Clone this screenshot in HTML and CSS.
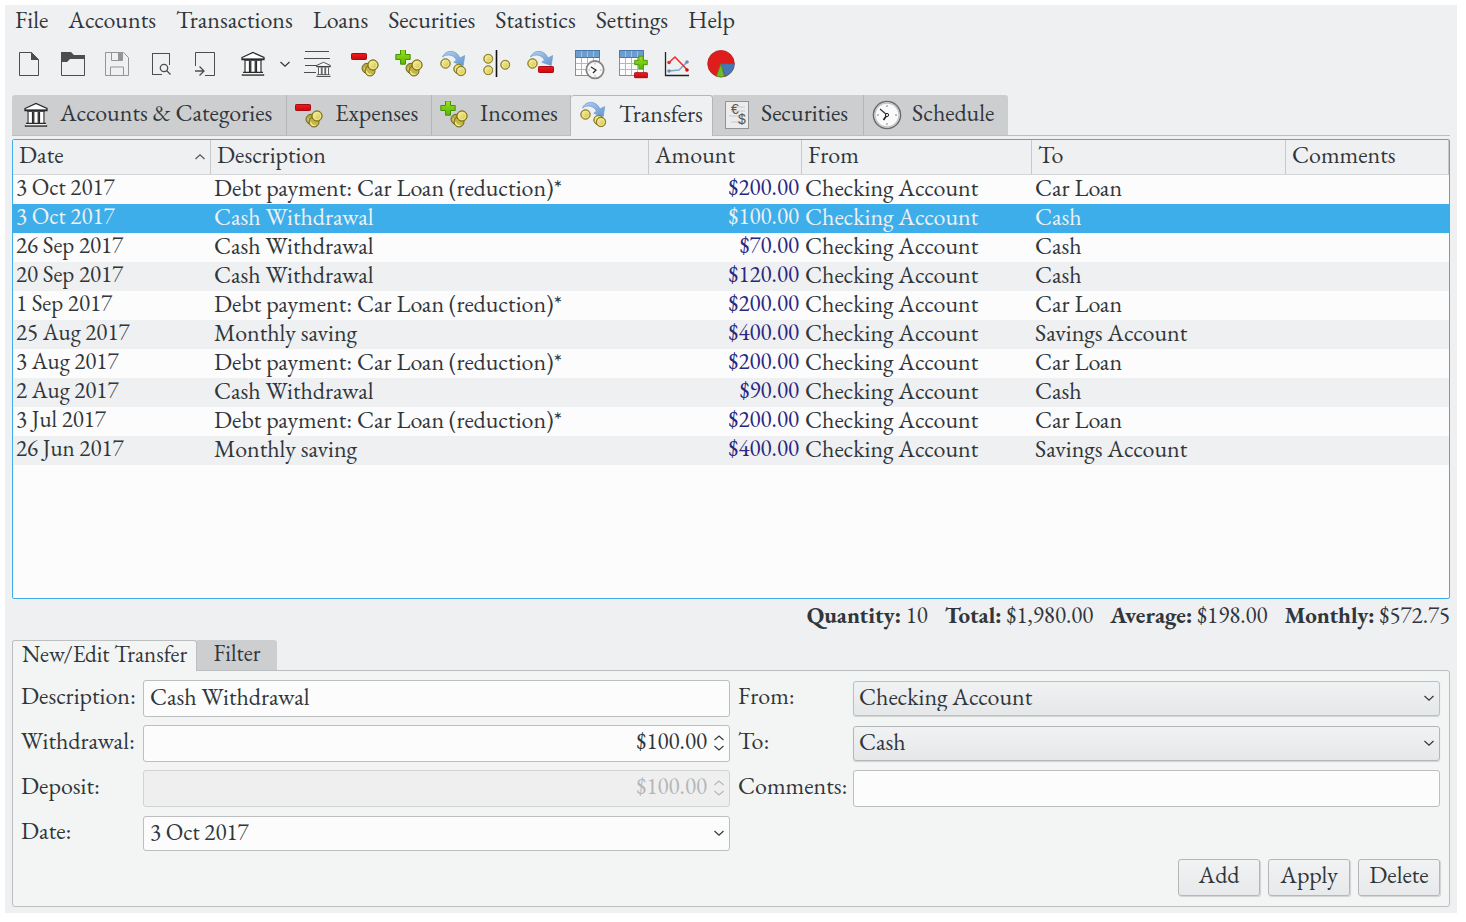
FILE: index.html
```
<!DOCTYPE html>
<html lang="en">
<head>
<meta charset="utf-8">
<title>Transfers</title>
<link rel="stylesheet" href="styles.css">
</head>
<body>
<svg class="defs" aria-hidden="true">
  <defs>
    <linearGradient id="gold" x1="0" y1="0" x2="1" y2="1"><stop offset="0" stop-color="#f8efa0"/><stop offset="1" stop-color="#d3c347"/></linearGradient>
    <linearGradient id="red" x1="0" y1="0" x2="0" y2="1"><stop offset="0" stop-color="#f01c1c"/><stop offset="1" stop-color="#c80a10"/></linearGradient>
    <linearGradient id="green" x1="0" y1="0" x2="0" y2="1"><stop offset="0" stop-color="#9be020"/><stop offset="1" stop-color="#5cb800"/></linearGradient>
    <linearGradient id="blue" x1="0" y1="0" x2="1" y2="1"><stop offset="0" stop-color="#b7d0ec"/><stop offset="1" stop-color="#5f97d2"/></linearGradient>
    <symbol id="coin" viewBox="0 0 12 12"><circle cx="6" cy="6" r="5.2" fill="#b9aa3c" stroke="#7d7120"/><circle cx="6" cy="6" r="3.7" fill="url(#gold)" stroke="#f6ee9c" stroke-width=".9"/></symbol>
    <symbol id="stack" viewBox="0 0 18 18"><circle cx="6" cy="9.3" r="5" fill="#b5a641" stroke="#6f6520"/><path d="M3.2 8.5a3.5 3.5 0 0 0 3 4" fill="none" stroke="#eee27c"/><circle cx="9" cy="12" r="5" fill="#c4b548" stroke="#6f6520"/><path d="M5.5 12a3.5 3.5 0 0 0 5 3" fill="none" stroke="#f5eb92" stroke-width="1.3"/><use href="#coin" x="6" y="0" width="12" height="12"/></symbol>
    <symbol id="minus" viewBox="0 0 16 7"><rect x=".5" y=".5" width="15" height="6" rx=".8" fill="url(#red)" stroke="#a80c10"/></symbol>
    <symbol id="plus" viewBox="0 0 16 16"><path d="M5.5.8h5v4.7h4.7v5h-4.7v4.7h-5v-4.7H.8v-5h4.7z" fill="url(#green)" stroke="#439207" stroke-linejoin="round"/></symbol>
    <symbol id="arc" viewBox="0 0 28 28"><path d="M3.500 7C6.500-.4 17-1 21 8L25.700 5.500 24.200 15.500 14.800 12.300 17.500 10C14.500 4.500 8 3.500 3.500 7z" fill="url(#blue)" stroke="#6b9bd0" stroke-width=".7"/></symbol>
    <symbol id="bank" viewBox="0 0 24 26"><path d="M1 6.500L12 1.500 23 6.500v2H1z" fill="#fff" stroke="#2b2b2b" stroke-width="1.300"/><path d="M1 8h22M3 9.700h18" stroke="#2b2b2b" stroke-width="1.100"/><path d="M3 10h18v11H3z" fill="#fff"/><path d="M4 10v11M8.500 10v11M9.800 10v11M14.200 10v11M15.500 10v11M20 10v11" stroke="#2b2b2b" stroke-width="1.200"/><path d="M2 21.500h20M.8 24h22.400" stroke="#2b2b2b" stroke-width="1.500"/><path d="M2 22.700h20" stroke="#fff"/></symbol>
    <symbol id="expense" viewBox="0 0 28 28"><use href="#minus" y="3" width="16" height="7"/><use href="#stack" x="10" y="9" width="18" height="18"/></symbol>
    <symbol id="income" viewBox="0 0 28 28"><use href="#stack" x="10" y="9" width="18" height="18"/><use href="#plus" width="16" height="16" y="-1"/></symbol>
    <symbol id="transfer" viewBox="0 0 28 28"><use href="#arc" width="28" height="28"/><use href="#coin" x="1" y="8" width="11" height="11"/><use href="#coin" x="14" y="13.500" width="11" height="11"/><use href="#coin" x="16.500" y="15.500" width="11" height="11"/></symbol>
    <symbol id="grid" viewBox="0 0 25 27"><rect x=".5" y=".5" width="24" height="25" fill="#fdfdfd" stroke="#8b8d90"/><path d="M1 13.500h23M1 19.500h23M6.500 8v17M12.500 8v17M18.500 8v17" stroke="#b5b7b9"/><path d="M.5.500h24v7H.5z" fill="#6d9dce" stroke="#4778ab"/><path d="M6.500 1v6M12.500 1v6M18.500 1v6" stroke="#9fc0e3"/></symbol>
    <symbol id="clock" viewBox="0 0 30 30"><circle cx="15" cy="15" r="13.500" fill="#fafafa" stroke="#6a6b6c" stroke-width="1.600"/><circle cx="15" cy="15" r="12" fill="none" stroke="#c2c2c2" stroke-width="1.300"/><path d="M8 9l7 6" fill="none" stroke="#333" stroke-width="1.200"/><path d="M15 15l-3.500 5" stroke="#222" stroke-width="1.700"/><circle cx="15" cy="15" r="1.600" fill="#fafafa" stroke="#222"/><path d="M15 5v2M15 23v2M5 15h2M23 15h2" stroke="#aaa" stroke-width="1.500"/></symbol>
    <symbol id="down" viewBox="0 0 12 8"><path d="M1.500 2L6 6.200 10.500 2" fill="none" stroke="currentColor" stroke-width="1.200"/></symbol>
    <symbol id="spin" viewBox="0 0 12 18"><path d="M1.500 6L6 2l4.500 4M1.500 12L6 16l4.500-4" fill="none" stroke="currentColor" stroke-width="1.100"/></symbol>
  </defs>
</svg>

<div class="app">
  <nav class="menubar" aria-label="Main menu">
    <button>File</button><button>Accounts</button><button>Transactions</button><button>Loans</button><button>Securities</button><button>Statistics</button><button>Settings</button><button>Help</button>
  </nav>

  <div class="toolbar" role="toolbar" aria-label="Tools">
    <div class="tools">
      <button aria-label="New"><svg viewBox="0 0 28 28"><path d="M4.500 2.500h12l7 7v16h-19z" fill="none" stroke="#4d4d4d"/><path d="M16 2l8 8h-8z" fill="#4d4d4d"/></svg></button>
      <button aria-label="Open"><svg viewBox="0 0 28 28"><path d="M2.500 2.500h9l3 3h11v20h-23z" fill="none" stroke="#4d4d4d"/><path d="M2 2h10l3 3h11v4H11l-3 3H2z" fill="#4d4d4d"/></svg></button>
      <button aria-label="Save"><svg viewBox="0 0 28 28"><path d="M2.500 2.500h18l5 5v18h-23zM7.500 25v-8h13v8M8.500 3v7.500h11V3" fill="none" stroke="#949596"/><path d="M15 3h4v7h-4z" fill="#949596"/></svg></button>
      <button aria-label="Print preview"><svg viewBox="0 0 28 28"><path d="M5 3.500h18M5.500 3v22M22.500 3v12M5 24.500h10" fill="none" stroke="#4d4d4d"/><circle cx="17" cy="18" r="3.700" fill="none" stroke="#4d4d4d" stroke-width="1.300"/><path d="M19.500 20.500l4 4" stroke="#4d4d4d" stroke-width="1.300"/></svg></button>
      <button aria-label="Import"><svg viewBox="0 0 28 28"><path d="M4.500 16V2.500h19v23H14" fill="none" stroke="#4d4d4d"/><path d="M4 21h9M8.500 16.500L13 21l-4.500 4.500" fill="none" stroke="#4d4d4d" stroke-width="1.300"/></svg></button>
    </div>
    <div class="tools">
      <button aria-label="Accounts"><svg viewBox="0 0 28 28"><use href="#bank" x="2" y="1" width="24" height="26"/></svg></button>
      <button class="drop" aria-label="More accounts"><svg class="chev"><use href="#down"/></svg></button>
      <button aria-label="Ledger"><svg viewBox="0 0 28 28"><path d="M2 1.500h24M1 8.500h26M2 15.500h12M1 22.500h12" stroke="#4d4d4d"/><use href="#bank" x="13" y="11" width="15" height="17"/></svg></button>
    </div>
    <div class="tools">
      <button aria-label="New expense"><svg><use href="#expense"/></svg></button>
      <button aria-label="New income"><svg><use href="#income"/></svg></button>
      <button aria-label="New transfer"><svg><use href="#transfer"/></svg></button>
      <button aria-label="Split transaction"><svg viewBox="0 0 28 28"><use href="#coin" y="3.500" width="10.500" height="10.500"/><use href="#coin" y="15" width="10.500" height="10.500"/><use href="#coin" x="17" y="9.500" width="10.500" height="10.500"/><path d="M13.500 0v27" stroke="#111" stroke-width="1.600"/></svg></button>
      <button aria-label="Debt payment"><svg viewBox="0 0 28 28"><use href="#arc" width="28" height="28"/><use href="#coin" y="8" width="11" height="11"/><use href="#minus" x="11" y="16" width="16" height="7"/></svg></button>
    </div>
    <div class="tools">
      <button aria-label="Schedule"><svg viewBox="0 0 28 28"><use href="#grid" width="25" height="27"/><circle cx="20" cy="19.700" r="8.700" fill="#f8f8f8" stroke="#858585" stroke-width="1.800"/><path d="M16 17l5 3-3 3" fill="none" stroke="#222" stroke-width="1.200"/><path d="M20 13v1.500M20 25v1.500M13.500 20H15M25 20h1.500" stroke="#aaa"/></svg></button>
      <button aria-label="Edit rows"><svg viewBox="0 0 28 28"><use href="#grid" width="25" height="27"/><use href="#plus" x="15" y="5" width="14" height="15"/><use href="#minus" x="15" y="22" width="14" height="6.500"/></svg></button>
      <button aria-label="Chart"><svg viewBox="0 0 28 28"><path d="M2.500 2v23.500H26" fill="none" stroke="#222" stroke-width="1.300"/><path d="M6 21l10-1 8-8" fill="none" stroke="#7fa5cc" stroke-width="1.500"/><path d="M6 12.500L12 7l12 12.500" fill="none" stroke="#ed2d2d" stroke-width="1.600"/><circle cx="6" cy="12.500" r="1.800" fill="#d33"/><circle cx="24" cy="20" r="1.800" fill="#c11"/><circle cx="6" cy="21" r="1.800" fill="#6890bc"/><circle cx="24" cy="12" r="1.800" fill="#6890bc"/></svg></button>
      <button aria-label="Report"><svg viewBox="0 0 28 28"><circle cx="14" cy="13.700" r="13.300" fill="#df1d1d" stroke="#ad1717" stroke-width=".7"/><path d="M14 13.700h13.300a13.300 13.300 0 0 1-9.300 12.700z" fill="#4878b4" stroke="#345f97" stroke-width=".6"/><path d="M14 13.700l3.300 12.900a13.300 13.300 0 0 1-7.800-.5z" fill="#71b82c" stroke="#4e8f1b" stroke-width=".6"/></svg></button>
    </div>
  </div>

  <div class="tabs" role="tablist" aria-label="Views">
    <button class="tab tab-accounts" role="tab"><svg viewBox="0 0 32 32"><use href="#bank" x="4" y="3" width="24" height="26"/></svg>Accounts &amp; Categories</button>
    <button class="tab tab-expenses" role="tab"><svg viewBox="0 0 32 32"><use href="#expense" y="2" width="28" height="28"/></svg>Expenses</button>
    <button class="tab tab-incomes" role="tab"><svg viewBox="0 0 32 32"><use href="#income" y="2" width="28" height="28"/></svg>Incomes</button>
    <button class="tab tab-transfers active" role="tab" aria-selected="true"><svg viewBox="0 0 32 32"><use href="#transfer" y="1" width="28" height="28"/></svg>Transfers</button>
    <button class="tab tab-securities" role="tab"><svg viewBox="0 0 32 32"><rect x="4.500" y="2.500" width="23" height="27" fill="#ececec" stroke="#929394"/><path d="M10 8h14M10 12h14M8 17h16M10 23h12" stroke="#dadada" stroke-width="2"/><text x="10" y="15" class="glyph">€</text><text x="17" y="25" class="glyph">$</text></svg>Securities</button>
    <button class="tab tab-schedule" role="tab"><svg viewBox="0 0 32 32"><use href="#clock" y="1" width="30" height="30"/></svg>Schedule</button>
  </div>

  <div class="list">
    <table>
      <colgroup><col class="c-date"><col class="c-desc"><col class="c-amount"><col class="c-from"><col class="c-to"><col></colgroup>
      <thead><tr><th><span class="sorted">Date<svg class="chev up"><use href="#down"/></svg></span></th><th>Description</th><th>Amount</th><th>From</th><th>To</th><th>Comments</th></tr></thead>
      <tbody>
        <tr><td class="fig">3 Oct 2017</td><td>Debt payment: Car Loan (reduction)*</td><td class="amt">$200.00</td><td>Checking Account</td><td>Car Loan</td><td></td></tr>
        <tr class="selected"><td class="fig">3 Oct 2017</td><td>Cash Withdrawal</td><td class="amt">$100.00</td><td>Checking Account</td><td>Cash</td><td></td></tr>
        <tr><td class="fig">26 Sep 2017</td><td>Cash Withdrawal</td><td class="amt">$70.00</td><td>Checking Account</td><td>Cash</td><td></td></tr>
        <tr><td class="fig">20 Sep 2017</td><td>Cash Withdrawal</td><td class="amt">$120.00</td><td>Checking Account</td><td>Cash</td><td></td></tr>
        <tr><td class="fig">1 Sep 2017</td><td>Debt payment: Car Loan (reduction)*</td><td class="amt">$200.00</td><td>Checking Account</td><td>Car Loan</td><td></td></tr>
        <tr><td class="fig">25 Aug 2017</td><td>Monthly saving</td><td class="amt">$400.00</td><td>Checking Account</td><td>Savings Account</td><td></td></tr>
        <tr><td class="fig">3 Aug 2017</td><td>Debt payment: Car Loan (reduction)*</td><td class="amt">$200.00</td><td>Checking Account</td><td>Car Loan</td><td></td></tr>
        <tr><td class="fig">2 Aug 2017</td><td>Cash Withdrawal</td><td class="amt">$90.00</td><td>Checking Account</td><td>Cash</td><td></td></tr>
        <tr><td class="fig">3 Jul 2017</td><td>Debt payment: Car Loan (reduction)*</td><td class="amt">$200.00</td><td>Checking Account</td><td>Car Loan</td><td></td></tr>
        <tr><td class="fig">26 Jun 2017</td><td>Monthly saving</td><td class="amt">$400.00</td><td>Checking Account</td><td>Savings Account</td><td></td></tr>
      </tbody>
    </table>
  </div>

  <div class="summary">
    <span><b>Quantity:</b> 10</span><span><b>Total:</b> $1,980.00</span><span><b>Average:</b> $198.00</span><span><b>Monthly:</b> $572.75</span>
  </div>

  <div class="subtabs" role="tablist" aria-label="Editor">
    <button class="subtab subtab-edit active" role="tab" aria-selected="true">New/Edit Transfer</button>
    <button class="subtab subtab-filter" role="tab">Filter</button>
  </div>
  <form class="panel">
    <div class="fields">
      <label for="desc">Description:</label>
      <input id="desc" class="field" type="text" value="Cash Withdrawal">
      <label for="from">From:</label>
      <div class="holder"><select id="from" class="field combo focus"><option>Checking Account</option></select><svg class="chev"><use href="#down"/></svg></div>
      <label for="withdrawal">Withdrawal:</label>
      <div class="holder"><input id="withdrawal" class="field number" type="text" value="$100.00"><svg class="spin"><use href="#spin"/></svg></div>
      <label for="to">To:</label>
      <div class="holder"><select id="to" class="field combo"><option>Cash</option></select><svg class="chev"><use href="#down"/></svg></div>
      <label for="deposit">Deposit:</label>
      <div class="holder off"><input id="deposit" class="field number" type="text" value="$100.00" disabled><svg class="spin"><use href="#spin"/></svg></div>
      <label for="comments">Comments:</label>
      <input id="comments" class="field" type="text">
      <label for="date">Date:</label>
      <div class="holder"><select id="date" class="field date"><option>3 Oct 2017</option></select><svg class="chev"><use href="#down"/></svg></div>
    </div>
    <div class="actions"><button type="button">Add</button><button type="button">Apply</button><button type="button">Delete</button></div>
  </form>
</div>
</body>
</html>
```
FILE: styles.css
```
* { box-sizing: border-box; }
body {
  margin: 0;
  padding: 5px 9px 9px 5px;
  background: #fff;
  color: #31363b;
  font: 24px/28px "EB Garamond", "Liberation Serif", serif;
}
button, input, select { font: inherit; color: inherit; margin: 0; }
button { border: 0; padding: 0; background: none; white-space: nowrap; }
svg { display: block; overflow: visible; }
.defs { position: absolute; width: 0; height: 0; }

.app {
  display: flex;
  flex-direction: column;
  min-height: calc(100vh - 14px);
  padding: 0 7px 6px;
  background: #eff0f1;
}

.menubar { display: flex; gap: 20px; height: 33px; padding: 0 0 4px 3px; }

.toolbar { display: flex; gap: 4px; height: 52px; margin: 0 0 5px -5px; align-items: center; }
.tools { display: flex; }
.tools button { display: grid; place-items: center; width: 44px; height: 44px; }
.tools button svg { width: 28px; height: 28px; }
.tools .drop { width: 20px; }
.tools .drop svg, .chev { width: 12px; height: 8px; }
.up { transform: rotate(180deg); }

.tabs { display: flex; border-bottom: 1px solid #bcbebf; margin-bottom: 3px; }
.tab {
  display: flex;
  align-items: center;
  gap: 8px;
  height: 40px;
  padding: 0 8px 4px;
  background: #cdced0;
  border-right: 1px solid #b4b6b7;
}
.tab svg { width: 32px; height: 32px; flex: none; margin-top: 4px; }
.tab:first-child { border-top-left-radius: 3px; }
.tab:last-child { border-top-right-radius: 3px; border-right: 0; }
.tab.active { height: 41px; margin-bottom: -1px; background: #eff0f1; border-top: 1px solid #b4b6b7; border-radius: 3px 3px 0 0; }
.tab-accounts { width: 275px; }
.tab-expenses { width: 145px; }
.tab-incomes { width: 139px; }
.tab-transfers { width: 142px; }
.tab-securities { width: 151px; }
.tab-schedule { width: 144px; }
.glyph { font: 14px "Liberation Sans", sans-serif; fill: #555; }

.list { flex: 1; background: #fcfcfc; border: 1px solid #3daee9; border-radius: 2px; }
table { width: 100%; table-layout: fixed; border-collapse: separate; border-spacing: 0; }
.c-date { width: 198px; }
.c-desc { width: 438px; }
.c-amount { width: 153px; }
.c-from { width: 230px; }
.c-to { width: 254px; }
th {
  height: 35px;
  padding: 0 6px 4px;
  background: #eff0f1;
  border-right: 1px solid #c8c9ca;
  border-bottom: 1px solid #d5d6d7;
  font-weight: normal;
  text-align: left;
}
.sorted { display: flex; justify-content: space-between; align-items: center; }
.sorted svg { margin: 4px -2px 0 0; color: #555; }
td { height: 29px; padding: 0 3px 4px; line-height: 25px; white-space: nowrap; }
.fig { font-size: 23px; }
.amt { font-size: 23px; text-align: right; color: #2a2781; }
tbody tr:nth-child(even) { background: #eff0f1; }
tbody tr.selected, .selected .amt { background: #3daee9; color: #eff0f1; }

.summary { display: flex; justify-content: flex-end; gap: 17px; height: 41px; padding-top: 2px; font-size: 23px; }

.subtabs { display: flex; font-size: 23px; }
.subtab { height: 30px; padding-bottom: 3px; background: #cdced0; border-radius: 0 3px 0 0; line-height: 27px; }
.subtab.active { position: relative; height: 31px; margin-bottom: -1px; padding-bottom: 5px; background: #f3f5f4; border: 1px solid #bcbebf; border-bottom: 0; border-radius: 3px 3px 0 0; }
.subtab-edit { width: 185px; }
.subtab-filter { width: 80px; }

.panel { padding: 9px 9px 10px 8px; background: #f3f5f4; border: 1px solid #bcbebf; border-radius: 0 3px 3px 3px; }
.fields { display: grid; grid-template-columns: 114px 1fr 107px 1fr; grid-auto-rows: 37px; gap: 8px; align-items: center; }
.fields label { padding-bottom: 5px; white-space: nowrap; }
.field {
  display: block;
  width: 100%;
  height: 37px;
  padding: 0 6px 5px;
  background: #fcfcfc;
  border: 1px solid #bcbebf;
  border-radius: 3px;
  appearance: none;
  outline: 0;
}
.combo, .date { height: 35px; padding: 0 5px 4px; }
.date { padding-left: 6px; font-size: 23px; }
.combo { background: linear-gradient(#f1f2f3, #e6e7e8); border-color: #b4b6b7; box-shadow: 0 1px 1px #d0d1d1; }
.combo.focus { border-color: #93cee9; }
.number { padding-right: 22px; text-align: right; font-size: 23px; }
.holder { position: relative; }
.holder svg { position: absolute; right: 5px; top: 0; bottom: 2px; margin: auto 0; pointer-events: none; }
.spin { width: 12px; height: 18px; }
.off { color: #b4b6b8; }
.off .field { background: #efefef; border-color: #d1d3d3; }

.actions { display: flex; justify-content: flex-end; gap: 8px; margin-top: 7px; }
.actions button {
  width: 82px;
  height: 37px;
  padding-bottom: 5px;
  background: linear-gradient(#f1f2f3, #e8e9ea);
  border: 1px solid #b4b6b7;
  border-radius: 3px;
  box-shadow: 1px 1px 1px #d0d1d1;
}
```
